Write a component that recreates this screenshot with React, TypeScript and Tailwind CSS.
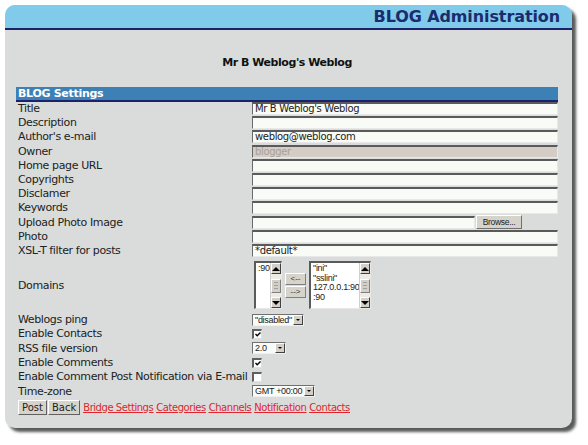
import React from "react";

const LABEL_FONT = "font-['DejaVu_Sans',Verdana,sans-serif]";
const SMALL_FONT = "font-['Liberation_Sans',Arial,sans-serif]";

function TextBox({ value = "", disabled = false, className = "" }: { value?: string; disabled?: boolean; className?: string }) {
  return (
    <div
      className={`h-[13px] border-t-2 border-l border-t-[#5a5a5a] border-l-[#6a6a6a] border-b border-r border-b-[#e8e8e8] border-r-[#e8e8e8] px-[2px] ${LABEL_FONT} text-[10px] leading-[10px] tracking-[-0.35px] whitespace-nowrap overflow-hidden ${
        disabled ? "bg-[#d3cdc5] text-[#a8a098]" : "bg-[#f9fbf6] text-[#222]"
      } ${className}`}
    >
      {value}
    </div>
  );
}

function DownArrow() {
  return (
    <svg width="8" height="4" viewBox="0 0 8 4">
      <path d="M0 0 L8 0 L4 4 Z" fill="#000" />
    </svg>
  );
}

function UpArrow() {
  return (
    <svg width="8" height="4" viewBox="0 0 8 4">
      <path d="M0 4 L8 4 L4 0 Z" fill="#000" />
    </svg>
  );
}

function Select({ value, width }: { value: string; width: string }) {
  return (
    <div className={`${width} h-[12px] flex border-t border-l border-[#707070] border-b border-r border-b-[#f0f0f0] border-r-[#f0f0f0] bg-[#f9fbf6]`}>
      <div className={`flex-1 ${SMALL_FONT} text-[9px] leading-[10px] pl-[2px] text-[#222] whitespace-nowrap tracking-[-0.3px]`}>{value}</div>
      <div className="w-[10px] h-[10px] shrink-0 bg-[#d4d0c8] border border-t-white border-l-white border-b-[#404040] border-r-[#404040] flex items-center justify-center">
        <svg width="4" height="2" viewBox="0 0 4 2">
          <path d="M0 0 L4 0 L2 2 Z" fill="#000" />
        </svg>
      </div>
    </div>
  );
}

function Checkbox({ checked }: { checked: boolean }) {
  return (
    <div className="w-[10px] h-[10px] bg-white border-t-2 border-l-2 border-[#606060] border-b border-r border-b-[#e0e0e0] border-r-[#e0e0e0] flex items-center justify-center">
      {checked && (
        <svg width="6" height="5" viewBox="0 0 6 5">
          <path d="M0.5 2 L2.2 3.8 L5.5 0.5" stroke="#000" strokeWidth="1.4" fill="none" />
        </svg>
      )}
    </div>
  );
}

function ScrollBar() {
  return (
    <div className="w-[12px] h-full flex flex-col bg-[#ecebe6] border-l border-[#d0d0d0]">
      <div className="h-[11px] bg-[#d4d0c8] border border-t-white border-l-white border-b-[#404040] border-r-[#404040] flex items-center justify-center">
        <UpArrow />
      </div>
      <div className="flex-1 flex items-center justify-center">
        <div className="w-[10px] h-[14px] bg-[#d4d0c8] border border-t-white border-l-white border-b-[#808080] border-r-[#808080] flex flex-col justify-center gap-[2px] px-[2px]">
          <div className="h-px bg-[#a0a0a0]" />
          <div className="h-px bg-[#a0a0a0]" />
          <div className="h-px bg-[#a0a0a0]" />
        </div>
      </div>
      <div className="h-[11px] bg-[#d4d0c8] border border-t-white border-l-white border-b-[#404040] border-r-[#404040] flex items-center justify-center">
        <DownArrow />
      </div>
    </div>
  );
}

function ListBox({ items, width }: { items: string[]; width: string }) {
  return (
    <div className={`${width} h-[48px] flex border-t-2 border-l-2 border-[#5a5a5a] border-b border-r border-b-[#e8e8e8] border-r-[#e8e8e8] bg-white`}>
      <div className={`flex-1 ${SMALL_FONT} text-[9px] leading-[9.5px] text-[#222] pl-[2px] pt-[1px] tracking-[-0.3px]`}>
        {items.map((it) => (
          <div key={it} className="whitespace-nowrap">{it}</div>
        ))}
      </div>
      <ScrollBar />
    </div>
  );
}

function SmallButton({ children }: { children: React.ReactNode }) {
  return (
    <div className={`w-[21px] h-[12px] bg-[#d6d3cb] border border-t-white border-l-white border-b-[#808080] border-r-[#808080] ${SMALL_FONT} text-[8px] leading-[10px] text-center text-[#333]`}>
      {children}
    </div>
  );
}

const rows: { label: string; h: string; field: React.ReactNode }[] = [
  { label: "Title", h: "h-[14px]", field: <TextBox value="Mr B Weblog's Weblog" /> },
  { label: "Description", h: "h-[14px]", field: <TextBox /> },
  { label: "Author's e-mail", h: "h-[14px]", field: <TextBox value="weblog@weblog.com" /> },
  { label: "Owner", h: "h-[15px]", field: <TextBox value="blogger" disabled /> },
  { label: "Home page URL", h: "h-[14px]", field: <TextBox /> },
  { label: "Copyrights", h: "h-[14px]", field: <TextBox /> },
  { label: "Disclamer", h: "h-[14px]", field: <TextBox /> },
  { label: "Keywords", h: "h-[14px]", field: <TextBox /> },
  {
    label: "Upload Photo Image",
    h: "h-[15px]",
    field: (
      <div className="flex items-center gap-[1px]">
        <TextBox className="w-[223px]" />
        <div className={`w-[46px] h-[14px] bg-[#d6d3cb] border border-t-white border-l-white border-b-[#707070] border-r-[#707070] ${SMALL_FONT} text-[8.5px] leading-[12px] text-center text-[#222] tracking-[-0.3px]`}>
          Browse...
        </div>
      </div>
    ),
  },
  { label: "Photo", h: "h-[14px]", field: <TextBox /> },
  { label: "XSL-T filter for posts", h: "h-[14px]", field: <TextBox value="*default*" /> },
  {
    label: "Domains",
    h: "h-[55px]",
    field: (
      <div className="flex items-center pl-[2px] gap-[2px]">
        <ListBox items={[":90"]} width="w-[28px]" />
        <div className="flex flex-col gap-[1px] pt-[1px] px-[1px]">
          <SmallButton>{"<--"}</SmallButton>
          <SmallButton>{"-->"}</SmallButton>
        </div>
        <ListBox items={['"ini"', '"sslini"', "127.0.0.1:90", ":90"]} width="w-[62px]" />
      </div>
    ),
  },
  { label: "Weblogs ping", h: "h-[14px]", field: <Select value={'"disabled"'} width="w-[52px]" /> },
  { label: "Enable Contacts", h: "h-[14px]", field: <Checkbox checked /> },
  { label: "RSS file version", h: "h-[15px]", field: <Select value="2.0" width="w-[34px]" /> },
  { label: "Enable Comments", h: "h-[14px]", field: <Checkbox checked /> },
  { label: "Enable Comment Post Notification via E-mail", h: "h-[14px]", field: <Checkbox checked={false} /> },
  { label: "Time-zone", h: "h-[15px]", field: <Select value="GMT +00:00" width="w-[63px]" /> },
];

const btn = `h-[15px] px-[3px] bg-[#d6d3cb] border border-t-white border-l-white border-b-[#606060] border-r-[#606060] ${LABEL_FONT} text-[10px] leading-[13px] text-[#222]`;

export default function App() {
  return (
    <div className="w-[588px] h-[445px] bg-white pt-[5px] pl-[5px] overflow-hidden">
      <div className="w-[567px] h-[423px] rounded-[10px] bg-[#d9dcda] shadow-[4px_4px_3px_rgba(0,0,0,0.65)] overflow-hidden flex flex-col">
        {/* Header */}
        <div className="h-[25px] bg-[#80cbe9] border-b-2 border-[#1c216b] flex items-center justify-end pr-[12px]">
          <h1 className={`${LABEL_FONT} font-bold text-[16px] tracking-[-0.1px] text-[#1c2a6e] leading-none pt-[1px]`}>BLOG Administration</h1>
        </div>

        <div className="pl-[11px] pr-[14px]">
          <div className={`${LABEL_FONT} font-bold text-[11px] tracking-[-0.45px] text-[#111] text-center mt-[25px] mb-[15px]`}>Mr B Weblog's Weblog</div>

          {/* Section bar */}
          <div className="h-[15px] bg-[#3c80b6] border-b-2 border-[#1c216b] flex items-center pl-[2px]">
            <span className={`${LABEL_FONT} font-bold text-[11px] tracking-[-0.3px] text-white leading-none`}>BLOG Settings</span>
          </div>

          <div>
            {rows.map((r) => (
              <div key={r.label} className={`grid grid-cols-[236px_1fr] items-center ${r.h}`}>
                <div className={`${LABEL_FONT} text-[11px] tracking-[-0.38px] text-[#222] pl-[2px] whitespace-nowrap leading-none`}>{r.label}</div>
                <div className="min-w-0">{r.field}</div>
              </div>
            ))}

            <div className="h-[17px] flex items-center gap-[1px] pl-[2px]">
              <div className={btn}>Post</div>
              <div className={btn}>Back</div>
              <div className={`flex gap-[3px] ${LABEL_FONT} text-[10px] tracking-[-0.45px] text-[#e0252c] underline pl-[2px]`}>
                <a href="#">Bridge Settings</a>
                <a href="#">Categories</a>
                <a href="#">Channels</a>
                <a href="#">Notification</a>
                <a href="#">Contacts</a>
              </div>
            </div>
          </div>
        </div>
      </div>
    </div>
  );
}
